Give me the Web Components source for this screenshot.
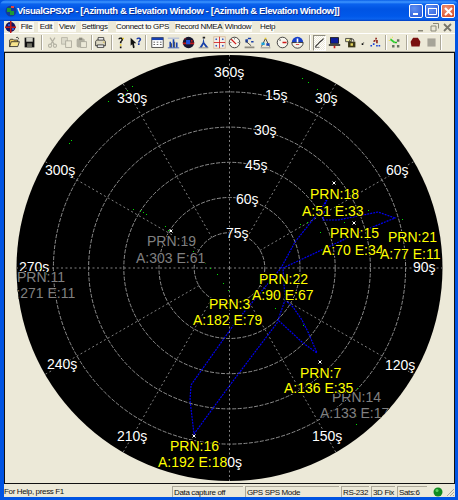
<!DOCTYPE html>
<html>
<head>
<meta charset="utf-8">
<title>VisualGPSXP</title>
<style>
  html, body { margin: 0; padding: 0; background: #0054e3; }
</style>
</head>
<body>

<gps-window>
  <title-bar slot="title">VisualGPSXP - [Azimuth &amp; Elevation Window - [Azimuth &amp; Elevation Window]]</title-bar>
  <menu-bar slot="menu"></menu-bar>
  <tool-bar slot="tools"></tool-bar>
  <polar-plot slot="plot"></polar-plot>
  <status-bar slot="status"></status-bar>
</gps-window>

<script>
class GpsWindow extends HTMLElement {
  constructor() {
    super();
    this.attachShadow({mode: 'open'});
    this.shadowRoot.innerHTML = `
      <style>
        :host {
          display: flex;
          flex-direction: column;
          width: 458px;
          height: 500px;
          box-sizing: border-box;
          background: #0054e3;
          font-family: "Liberation Sans", Arial, sans-serif;
          border-radius: 6px 6px 0 0;
          overflow: hidden;
        }
        .inner {
          flex: 1;
          min-height: 0;
          display: flex;
          flex-direction: column;
          margin: 0 3px 3px 4px;
          background: #ece9d8;
        }
      </style>
      <slot name="title"></slot>
      <div class="inner">
        <slot name="menu"></slot>
        <slot name="tools"></slot>
        <slot name="plot"></slot>
        <slot name="status"></slot>
      </div>
    `;
  }
}

class TitleBar extends HTMLElement {
  constructor() {
    super();
    this.attachShadow({mode: 'open'});
    this.shadowRoot.innerHTML = `
      <style>
        :host {
          display: flex;
          align-items: center;
          height: 21px;
          flex: none;
          padding: 0 3px 0 5px;
          box-sizing: border-box;
          background: linear-gradient(to bottom, #0a5fe8 0, #3d95ff 2px, #0a62ee 4px, #0054e3 9px, #0058ea 16px, #0a62ee 19px, #003dc0 21px);
          color: #fff;
        }
        svg { flex: none; margin-right: 0; }
        .text {
          flex: 1;
          min-width: 0;
          font-size: 9.5px;
          font-weight: bold;
          letter-spacing: -0.4px;
          white-space: nowrap;
          text-shadow: 1px 1px 0 #0f2f90;
        }
        .btns { display: flex; gap: 2px; flex: none; margin-top: 1px; }
        .btn {
          width: 14px;
          height: 14px;
          box-sizing: border-box;
          border: 1px solid #fff;
          border-radius: 2px;
          background: radial-gradient(circle at 35% 30%, #5f8ff0, #2556d8);
          display: flex;
          align-items: center;
          justify-content: center;
        }
        .btn.close { background: radial-gradient(circle at 35% 30%, #ee9478, #d5431c); }
      </style>
      <svg width="12" height="14" viewBox="0 0 12 14">
        <circle cx="6" cy="7" r="5.5" fill="#123a9c"/>
        <path d="M2 4h4v3h3v4H5V8H2z" fill="#1e9a35"/>
        <path d="M6 2h3v2H6z" fill="#e8423a"/>
      </svg>
      <div class="text"><slot></slot></div>
      <div class="btns">
        <div class="btn"><svg width="9" height="9" viewBox="0 0 9 9"><rect x="1" y="6" width="5" height="2" fill="#fff"/></svg></div>
        <div class="btn"><svg width="9" height="9" viewBox="0 0 9 9"><path d="M.5 1.5h8v6h-8z" fill="none" stroke="#fff"/><path d="M0 1h9v1H0z" fill="#fff"/></svg></div>
        <div class="btn close"><svg width="9" height="9" viewBox="0 0 9 9"><path d="M1 1l7 7M8 1L1 8" stroke="#fff" stroke-width="2"/></svg></div>
      </div>
    `;
  }
}

class MenuBar extends HTMLElement {
  constructor() {
    super();
    this.attachShadow({mode: 'open'});
    const items = [['File', 15, 4], ['Edit', 16, 4], ['View', 18, 5], ['Settings', 27, 8],
                   ['Connect to GPS', 53, 6], ['Record NMEA', 44, 5], ['Window', 28, 8], ['Help', 14, 0]];
    this.shadowRoot.innerHTML = `
      <style>
        :host {
          display: flex;
          align-items: center;
          height: 12px;
          flex: none;
          font-size: 8px;
          letter-spacing: -0.35px;
          color: #111;
        }
        svg { flex: none; margin: 0 3px 0 1px; }
        .item {
          flex: none;
          background: #fbfaf5;
          line-height: 10px;
          white-space: nowrap;
          text-align: center;
        }
        .mdi { margin-left: auto; display: flex; gap: 4px; padding-right: 3px; }
        .mdi svg { margin: 0; display: block; }
      </style>
      <svg width="11" height="12" viewBox="0 0 11 12">
        <circle cx="5.5" cy="6" r="5" fill="#14145e"/>
        <path d="M5 0h1.5v12H5zM0 5.5h11V7H0z" fill="#c01818"/>
        <path d="M3 3h2v2H3zM7 7h2v2H7z" fill="#2a52d0"/>
      </svg>
      ${items.map(i => `<span class="item" style="width:${i[1]}px;margin-right:${i[2]}px">${i[0]}</span>`).join('')}
      <div class="mdi">
        <svg width="9" height="9" viewBox="0 0 9 9"><rect x="1" y="7" width="5" height="1.5" fill="#8a8878"/></svg>
        <svg width="9" height="9" viewBox="0 0 9 9"><path d="M3 .5h5.500v5M1 3h5v5H1z" fill="none" stroke="#8a8878"/></svg>
        <svg width="9" height="9" viewBox="0 0 9 9"><path d="M1 1l7 7M8 1L1 8" stroke="#77756a" stroke-width="1.800"/></svg>
      </div>
    `;
  }
}

const ICONS = {
  open: '<path d="M2 13V5l1-1h3l1 1h5v2z" fill="#f4d060" stroke="#222"/><path d="M2 13l2-6h10l-2 6z" fill="#f7e48c" stroke="#222"/><path d="M10 2c2-1 3 0 3 2" fill="none" stroke="#222"/>',
  save: '<rect x="2" y="2" width="12" height="12" fill="#111"/><rect x="4" y="2" width="8" height="5" fill="#cfcfc4"/><rect x="5" y="9" width="6" height="5" fill="#6e6e62"/>',
  cut: '<path d="M5 2l5 8M11 2L6 10" stroke="#b4b2a4" stroke-width="1.500" fill="none"/><circle cx="5" cy="12" r="2" fill="none" stroke="#b4b2a4" stroke-width="1.300"/><circle cx="11" cy="12" r="2" fill="none" stroke="#b4b2a4" stroke-width="1.300"/>',
  copy: '<rect x="2" y="2" width="7" height="8" fill="#dcdacb" stroke="#b4b2a4"/><rect x="7" y="6" width="7" height="8" fill="#ece9d8" stroke="#a6a496"/>',
  paste: '<rect x="2" y="3" width="10" height="11" rx="2" fill="#b4b2a4"/><rect x="5" y="2" width="4" height="3" fill="#8e8c80"/><rect x="7" y="7" width="7" height="7" fill="#ece9d8" stroke="#a6a496"/>',
  print: '<path d="M5 2h7v4H5z" fill="#fff" stroke="#222"/><path d="M2 7c0-1 1-2 2-2h8c1 0 2 1 2 2v5H2z" fill="#ddd9c4" stroke="#222"/><path d="M4 11h8v3H4z" fill="#fff" stroke="#222"/><path d="M11 7h2v1h-2z" fill="#d8b020"/>',
  what: '<path d="M4 4c0-3 6-3 6 0 0 2-2 2-2 4v1H6V8c0-2 2-2 2-4-1-1-2-1-2 0z" fill="#111"/><path d="M6 10h2v2H6z" fill="#e8c818"/><path d="M6 13h2v2H6z" fill="#111"/><path d="M9 2h2v2H9z" fill="#e8c818"/>',
  whatis: '<path d="M2 2l7 7H6l1 5-2 1-1-5-2 2z" fill="#111"/><path d="M9 4c0-3 6-3 6 0 0 2-2 2-2 4h-2c0-2 2-2 2-4-1-1-2-1-2 0z" fill="#1638a8"/><path d="M11 9h2v2h-2z" fill="#1638a8"/>',
  table: '<rect x="1" y="2" width="14" height="12" fill="#fff" stroke="#333"/><rect x="1" y="2" width="14" height="3" fill="#1840b0"/><path d="M3 7h2v1H3zM7 7h2v1H7zM11 7h2v1h-2zM3 10h2v1H3zM7 10h2v1H7zM11 10h2v1h-2z" fill="#333"/>',
  bars: '<path d="M1 14h14v1H1z" fill="#1840b0"/><path d="M3 7h2v7H3zM7 4h2v10H7zM11 8h2v6h-2z" fill="#1840b0"/><path d="M5 9h1v5H5zM9 7h1v7H9z" fill="#333"/><path d="M1 2h14v1H1z" fill="#88a0d8"/>',
  globe: '<circle cx="8" cy="8" r="7" fill="#151530"/><path d="M1 8h14v2H1z" fill="#c01818"/><path d="M5 5h5v5H5z" fill="#2050d8"/><path d="M11 5h2v2h-2zM3 3h2v1H3z" fill="#c01818"/>',
  figure: '<path d="M8 2l-1 6-4 6h3l2-4 3 4h3L9 8z" fill="#1840a8"/><path d="M2 14h12v1H2z" fill="#777"/><path d="M7 1h3v2H7z" fill="#222"/>',
  grid: '<rect x="1" y="1" width="14" height="14" fill="#f4f2ea" stroke="#d4b090"/><path d="M8 1v14M1 8h14" stroke="#d01818"/><path d="M4 3v2M12 3v2M4 11v2M12 11v2M3 4h2M11 4h2M3 12h2M11 12h2" stroke="#1840b0"/>',
  gauge: '<circle cx="8" cy="8" r="6.500" fill="#f8f6ee" stroke="#222"/><path d="M4 4l6 6" stroke="#d01818" stroke-width="1.500"/><path d="M8 3v1M3 8h1M12 8h1" stroke="#222"/>',
  dish: '<path d="M6 2h4v2H6zM3 4h3v4H3zM10 6h3v2h-3z" fill="#1840a8"/><path d="M3 6l7 6" stroke="#333"/><path d="M2 13h12v2H2z" fill="#8e8c80"/>',
  sat: '<path d="M8 3l-5 10M8 3l5 10" stroke="#222"/><path d="M7 2h2v2H7z" fill="#e8c818"/><path d="M3 8h4v3H3z" fill="#18a0d8"/><path d="M9 9h4v3H9z" fill="#1840b0"/><path d="M2 14h12v1H2z" fill="#777"/>',
  clock: '<circle cx="8" cy="8" r="6.500" fill="#f8f6ee" stroke="#222"/><path d="M8 8h5" stroke="#d01818" stroke-width="2"/><path d="M4 5h2" stroke="#222"/>',
  dome: '<path d="M1 8a7 7 0 0 1 14 0z" fill="#1840c8"/><path d="M1 8a7 7 0 0 0 14 0z" fill="#f4f2ea" stroke="#222"/><path d="M7 3h2v5H7z" fill="#fff"/><path d="M6 10h4v1H6z" fill="#d01818"/>',
  track: '<path d="M3 14c1-4 3-3 4-5s4-3 6-6" fill="none" stroke="#333" stroke-width="1.300"/><path d="M3 14h5" stroke="#555"/>',
  monitor: '<rect x="3" y="2" width="10" height="7" fill="#0c1c9a" stroke="#111"/><path d="M1 10h14v2H1z" fill="#111"/><path d="M7 12h2v3H7z" fill="#d01818"/>',
  lock: '<path d="M2 3h7v4H2z" fill="#f4f0a0" stroke="#333"/><rect x="5" y="7" width="9" height="7" fill="#3c3818"/><rect x="8" y="9" width="3" height="3" fill="#e8d860"/><path d="M7 7V5c0-2 5-2 5 0v2" fill="none" stroke="#222"/>',
  dot: '<path d="M7 9h2v2H7z" fill="#111"/><path d="M9 8h1v1H9z" fill="#111"/>',
  net: '<path d="M9 2h2v2H9zM7 5h2v2H7zM10 5h2v4h-2z" fill="#8c2018"/><path d="M3 11h2v2H3zM6 9h2v2H6z" fill="#1840d8"/><path d="M10 11h2v2h-2zM13 11h2v2h-2z" fill="#1840d8"/><path d="M7 7l3-3" stroke="#8c2018"/>',
  ant: '<path d="M3 2h1v1H3zM1 5h1v1H1zM5 1h1v1H5z" fill="#e8e020"/><path d="M3 4l5 4" stroke="#30d030" stroke-width="2"/><path d="M8 7h3v2H8z" fill="#18c018"/><path d="M11 4h3v3h-3zM5 11h3v3H5zM11 11h3v3h-3z" fill="#667060"/>',
  rec: '<path d="M5 2h6l3 5-1 6H3L2 7z" fill="#7a1010"/>',
  stop: '<rect x="3" y="3" width="10" height="10" fill="#a6a498"/>'
};

// each entry: icon name (or | for a separator), width of its slot
const TOOLS = [
  ['open', 15], ['save', 15], ['|', 8], ['cut', 14], ['copy', 15], ['paste', 15], ['|', 4], ['print', 15],
  ['|', 6], ['what', 14], ['whatis', 14], ['|', 7], ['table', 16], ['bars', 16], ['globe', 15], ['figure', 15],
  ['grid', 16], ['gauge', 15], ['dish', 15], ['sat', 17], ['clock', 16], ['dome', 15], ['|', 8], ['track', 13, 'on'],
  ['monitor', 16], ['lock', 16], ['dot', 8], ['net', 17], ['|', 4], ['ant', 14], ['|', 10], ['rec', 8],
  ['', 4], ['stop', 16], ['|', 3]
];

class ToolBar extends HTMLElement {
  constructor() {
    super();
    this.attachShadow({mode: 'open'});
    this.shadowRoot.innerHTML = `
      <style>
        :host {
          display: flex;
          align-items: center;
          height: 19px;
          flex: none;
          box-sizing: border-box;
          padding-left: 3px;
          border-top: 1px solid #fff;
          border-bottom: 1px solid #aca899;
        }
        .cell { flex: none; height: 16px; display: flex; align-items: center; justify-content: center; }
        .cell svg { width: 13px; height: 13px; flex: none; }
        .cell.on {
          box-sizing: border-box;
          border: 1px solid;
          border-color: #8e8c80 #fff #fff #8e8c80;
          background: repeating-conic-gradient(#fff 0 25%, #ece9d8 0 50%) 0 0 / 2px 2px;
        }
        .sep { flex: none; height: 15px; display: flex; justify-content: center; }
        .sep i { display: block; width: 1px; height: 100%; background: #aca899; box-shadow: 1px 0 0 #fff; }
      </style>
      ${TOOLS.map(t => {
        if (t[0] === '|') return `<div class="sep" style="width:${t[1]}px"><i></i></div>`;
        if (t[0] === '') return `<div style="width:${t[1]}px;flex:none"></div>`;
        return `<div class="cell ${t[2] || ''}" style="width:${t[1]}px"><svg viewBox="0 0 16 16">${ICONS[t[0]]}</svg></div>`;
      }).join('')}
    `;
  }
}

const CX = 229.5, CY = 268, OUTER = 213;

const DEGREES = [
  ['360ş', 214, 77], ['330ş', 117, 103], ['300ş', 45, 175], ['270ş', 19, 272], ['240ş', 47, 369],
  ['210ş', 117, 441], ['180ş', 211.7, 467], ['150ş', 312, 441], ['120ş', 385, 370], ['90ş', 413, 272],
  ['60ş', 386, 175], ['30ş', 315, 103], ['15ş', 265, 100], ['30ş', 254, 135], ['45ş', 245, 170],
  ['60ş', 236, 204], ['75ş', 226, 238]
];

const SATS = [
  ['#808080', 'PRN:14', 332, 402, 'A:133 E:17', 320, 418],
  ['#808080', 'PRN:11', 17, 282, 'A:271 E:11', 7, 298],
  ['#808080', 'PRN:19', 147, 246, 'A:303 E:61', 136, 263],
  ['#ffff00', 'PRN:18', 310, 199, 'A:51 E:33', 302, 216],
  ['#ffff00', 'PRN:15', 330, 238, 'A:70 E:34', 322, 255],
  ['#ffff00', 'PRN:21', 388, 242, 'A:77 E:11', 380, 259],
  ['#ffff00', 'PRN:22', 259, 284, 'A:90 E:67', 252, 300],
  ['#ffff00', 'PRN:3', 209, 309, 'A:182 E:79', 193, 325],
  ['#ffff00', 'PRN:7', 300, 378, 'A:136 E:35', 284, 393],
  ['#ffff00', 'PRN:16', 170, 451, 'A:192 E:18', 158, 467]
];

const TRACKS = [
  '327,200 315,217 295,242 281,268 235,323 191,385 190,400 194,434 230,385 277,323 285,300 283,268 358,233 395,218 378,212 338,220 323,220 326,200',
  '285,300 293,307 302,320 308,332 317,353 303,343 278,320'
];

const GREEN = [[132,86],[127,90],[124,95],[108,101],[71,140],[69,143],[302,78],[308,82],[317,89],[331,100],
  [133,209],[140,210],[143,212],[146,214],[165,226],[168,230],[193,251],[205,263],[210,268],[217,274],[223,283],[228,290],
  [40,268],[31,278],[368,210],[307,222],[300,224],[320,232],[402,219],[344,222],[275,308],[303,325],
  [357,388],[357,398],[356,416],[356,424],[308,332]];

const MARKS = [[334,183],[320,362],[194,436],[171,231],[354,223]];

class PolarPlot extends HTMLElement {
  constructor() {
    super();
    this.attachShadow({mode: 'open'});
    let rings = '';
    for (let r = 35.3; r < 180; r += 35.2) {
      rings += `<circle cx="${CX}" cy="${CY}" r="${r}" fill="none" stroke="#8c8c8c" stroke-dasharray="4 1.500"/>`;
    }
    let spokes = '';
    for (let a = 0; a < 360; a += 30) {
      const s = Math.sin(a * Math.PI / 180), c = Math.cos(a * Math.PI / 180);
      const x2 = (CX + s * OUTER).toFixed(1), y2 = (CY - c * OUTER).toFixed(1);
      const x1 = (a % 90 ? CX + s * 35 : CX).toFixed(1), y1 = (a % 90 ? CY - c * 35 : CY).toFixed(1);
      spokes += `<line x1="${x1}" y1="${y1}" x2="${x2}" y2="${y2}" stroke="#808080" stroke-dasharray="2 2.500"/>`;
    }
    const label = (fill, t, x, y) =>
      `<text x="${x}" y="${y}" fill="${fill}" stroke="#000" stroke-width="2" paint-order="stroke">${t}</text>`;
    this.shadowRoot.innerHTML = `
      <style>
        :host {
          display: block;
          flex: 1;
          min-height: 0;
          box-sizing: border-box;
          border: 1px solid #111;
          background: #ece9d8;
        }
        svg { display: block; width: 449px; height: 430px; }
        text { font: 14px "Liberation Sans", Arial, sans-serif; }
      </style>
      <svg viewBox="5 53 449 430">
        <defs>
          <clipPath id="dish"><circle cx="${CX}" cy="${CY}" r="${OUTER}"/></clipPath>
        </defs>
        <circle cx="${CX}" cy="${CY}" r="${OUTER}" fill="#000"/>
        <g clip-path="url(#dish)">
          ${rings}
          ${spokes}
          ${DEGREES.map(d => label('#fff', d[0], d[1], d[2])).join('')}
          ${GREEN.map(p => `<rect x="${p[0]}" y="${p[1]}" width="1" height="1" fill="#00e000"/>`).join('')}
          ${TRACKS.map(p => `<polyline points="${p}" fill="none" stroke="#0000f0" stroke-width="1.200" stroke-dasharray="2 1"/>`).join('')}
          ${MARKS.map(m => `<path d="M${m[0]-1.500} ${m[1]-1.500}l3 3m0 -3l-3 3" stroke="#fff" fill="none"/>`).join('')}
          ${SATS.map(s => label(s[0], s[1], s[2], s[3]) + label(s[0], s[4], s[5], s[6])).join('')}
        </g>
      </svg>
    `;
  }
}

class StatusBar extends HTMLElement {
  constructor() {
    super();
    this.attachShadow({mode: 'open'});
    this.shadowRoot.innerHTML = `
      <style>
        :host {
          display: flex;
          align-items: flex-end;
          gap: 2px;
          height: 13px;
          flex: none;
          font-size: 8px;
          letter-spacing: -0.35px;
          color: #111;
          white-space: nowrap;
        }
        .msg { flex: 1; line-height: 11px; }
        .pane {
          flex: none;
          height: 11px;
          line-height: 11px;
          box-sizing: border-box;
          padding-left: 1px;
          border-top: 1px solid #aca899;
          border-left: 1px solid #aca899;
        }
        .led { flex: none; width: 26px; display: flex; align-items: center; justify-content: space-between; padding-left: 4px; box-sizing: border-box; }
      </style>
      <span class="msg">For Help, press F1</span>
      <span class="pane" style="width:71px">Data capture off</span>
      <span class="pane" style="width:94px">GPS SPS Mode</span>
      <span class="pane" style="width:28px">RS-232</span>
      <span class="pane" style="width:24px">3D Fix</span>
      <span class="pane" style="width:30px">Sats:6</span>
      <div class="led">
        <svg width="10" height="10" viewBox="0 0 10 10"><circle cx="5" cy="5" r="4.500" fill="#128a20"/><circle cx="4" cy="3.500" r="1.500" fill="#58d060"/></svg>
        <svg width="9" height="9" viewBox="0 0 9 9"><path d="M8 1L1 8M8 4L4 8M8 7L7 8" stroke="#aca899"/></svg>
      </div>
    `;
  }
}

customElements.define('gps-window', GpsWindow);
customElements.define('title-bar', TitleBar);
customElements.define('menu-bar', MenuBar);
customElements.define('tool-bar', ToolBar);
customElements.define('polar-plot', PolarPlot);
customElements.define('status-bar', StatusBar);
</script>
</body>
</html>
